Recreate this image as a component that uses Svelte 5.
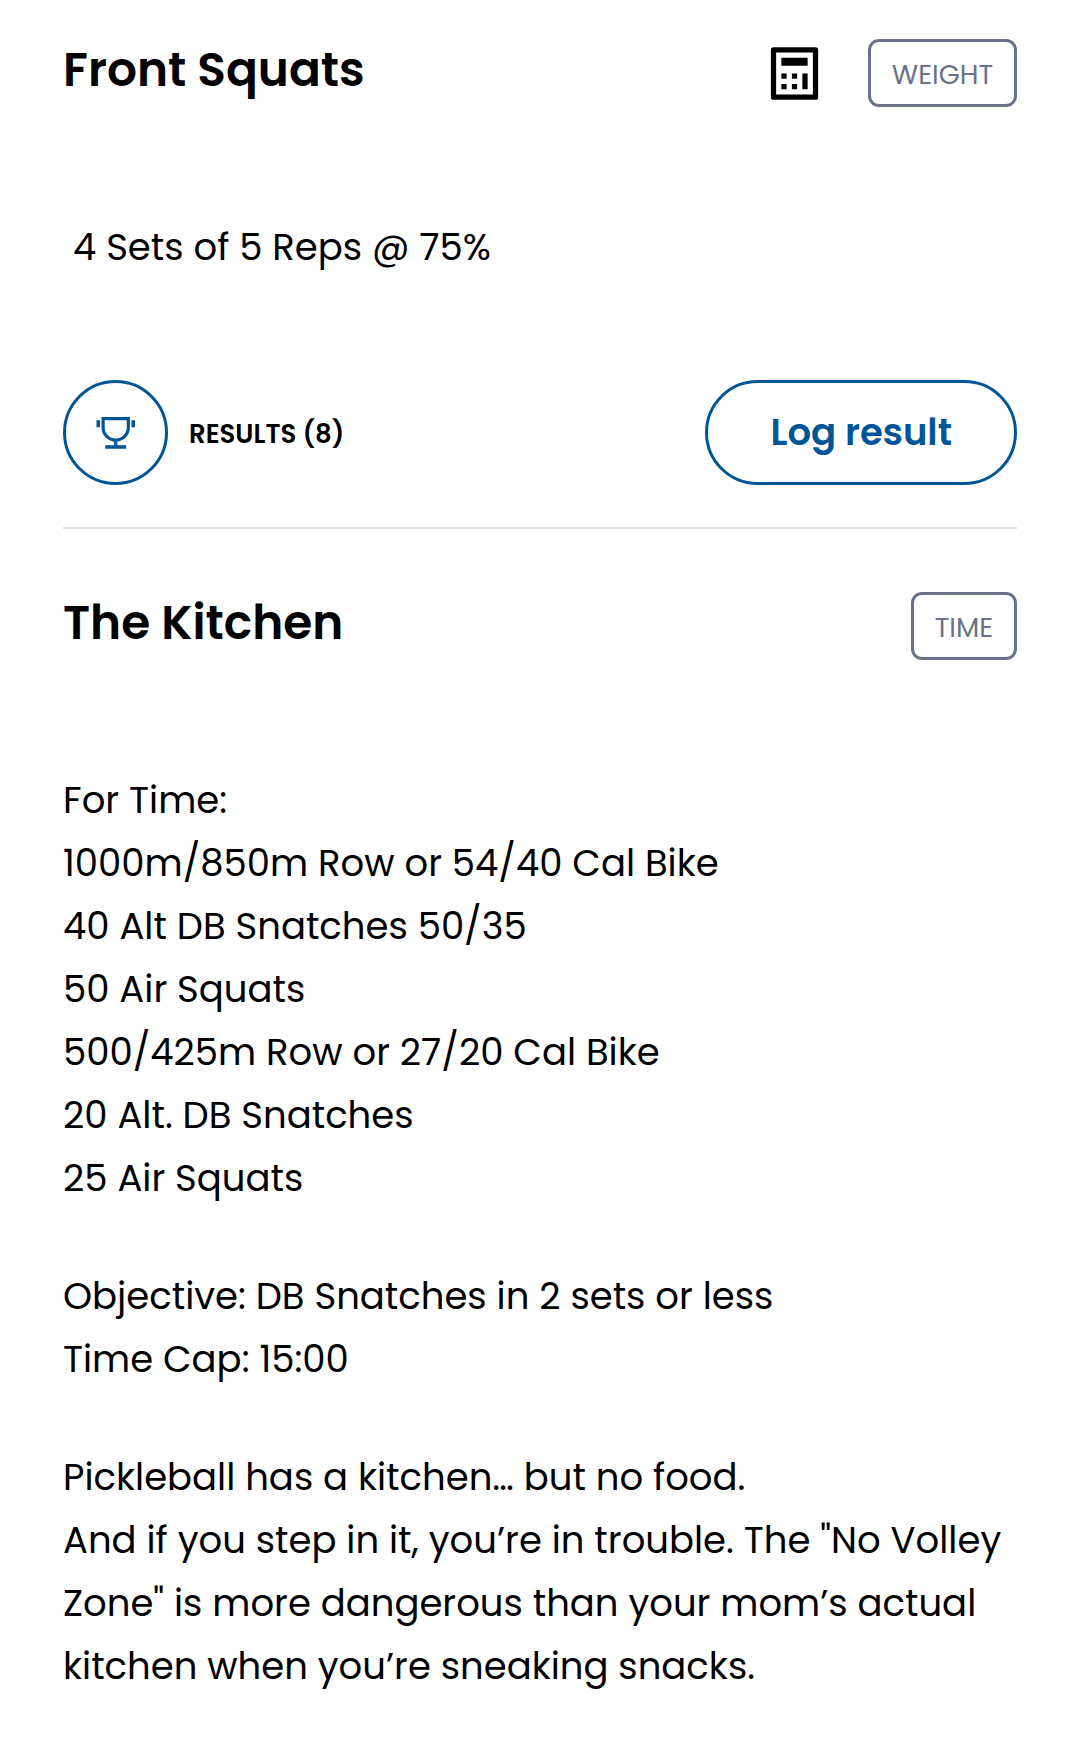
<script>
  const kitchen = [
    [
      'For Time:',
      '1000m/850m Row or 54/40 Cal Bike',
      '40 Alt DB Snatches 50/35',
      '50 Air Squats',
      '500/425m Row or 27/20 Cal Bike',
      '20 Alt. DB Snatches',
      '25 Air Squats',
    ],
    ['Objective: DB Snatches in 2 sets or less', 'Time Cap: 15:00'],
    [
      'Pickleball has a kitchen… but no food.',
      'And if you step in it, you’re in trouble. The "No Volley Zone" is more dangerous than your mom’s actual kitchen when you’re sneaking snacks.',
    ],
  ];
</script>

<main>
  <section class="workout">
    <header>
      <h2>Front Squats</h2>
      <div class="tools">
        <button class="calc" aria-label="Percentage calculator">
          <svg viewBox="0 0 24 24" aria-hidden="true">
            <rect x="4" y="3" width="16" height="18" fill="none" stroke="currentColor" stroke-width="2" stroke-linejoin="round" />
            <path fill="currentColor" d="M7 6h10v3H7zM7 12h2v2H7zM11 12h2v2h-2zM7 16h2v2H7zM11 16h2v2h-2zM15 12h2v6h-2z" />
          </svg>
        </button>
        <span class="badge">WEIGHT</span>
      </div>
    </header>
    <div class="details">
      <p class="indented">4 Sets of 5 Reps @ 75%</p>
    </div>
    <footer>
      <button class="results">
        <span class="ring">
          <svg viewBox="0.500 0.500 40 34" aria-hidden="true">
            <path d="M7.600 3.100h25.200v8.900a12.600 12.600 0 0 1-25.200 0zM20.200 24.600v6" fill="none" stroke="currentColor" stroke-width="3.200" />
            <path d="M9.700 29.700h21v3.500h-21zM1 4.700h3.500v7H1zM36 4.700h3.500v7H36z" fill="currentColor" />
          </svg>
        </span>
        <span class="count">RESULTS (8)</span>
      </button>
      <button class="log">Log result</button>
    </footer>
  </section>

  <section class="workout">
    <header>
      <h2>The Kitchen</h2>
      <span class="badge">TIME</span>
    </header>
    <div class="details">
      {#each kitchen as block}
        <div class="block">
          {#each block as line}
            <p>{line}</p>
          {/each}
        </div>
      {/each}
    </div>
  </section>
</main>

<style>
  :global(body) {
    margin: 0;
    background: #fff;
  }
  main {
    padding: 39px 63px 34px;
    color: #000;
    font-family: Poppins, Inter, sans-serif;
  }
  button {
    padding: 0;
    border: 0;
    background: none;
    color: inherit;
    font: inherit;
    cursor: pointer;
  }
  header,
  footer,
  .tools,
  .results {
    display: flex;
    align-items: center;
  }
  header,
  footer {
    justify-content: space-between;
  }
  h2 {
    margin: 0;
    padding-bottom: 6px;
    font-size: 47px;
    font-weight: 600;
    line-height: 62px;
  }
  .tools {
    gap: 42px;
  }
  .calc,
  .calc svg {
    display: block;
    width: 63px;
    height: 63px;
  }
  .badge {
    box-sizing: border-box;
    padding: 4px 21px 0;
    border: 3px solid #6a7289;
    border-radius: 11px;
    color: #6a7289;
    font-size: 27px;
    line-height: 58px;
  }
  .details {
    padding: 109px 0 101px;
    font-size: 37px;
    line-height: 63px;
  }
  p {
    margin: 0;
  }
  .indented {
    padding-left: 10px;
  }
  .block + .block {
    margin-top: 55px;
  }
  footer {
    padding-bottom: 42px;
    border-bottom: 2px solid #e2e2e2;
  }
  .results {
    gap: 21px;
  }
  .count {
    padding-top: 4px;
    font-size: 26px;
    font-weight: 600;
  }
  .ring {
    box-sizing: border-box;
    display: grid;
    place-items: center;
    width: 105px;
    height: 105px;
    border: 3px solid #005596;
    border-radius: 50%;
    color: #005596;
  }
  .ring svg {
    width: 40px;
    height: 34px;
  }
  .log {
    padding: 0 62px;
    border: 3px solid #005596;
    border-radius: 53px;
    color: #005596;
    font-size: 37px;
    font-weight: 600;
    line-height: 99px;
  }
  .workout + .workout {
    margin-top: 63px;
  }
</style>
